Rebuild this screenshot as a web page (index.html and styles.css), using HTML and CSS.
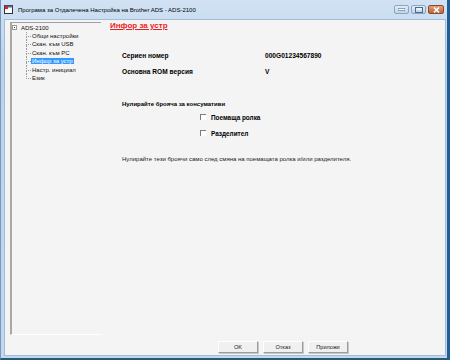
FILE: index.html
```html
<!DOCTYPE html>
<html lang="bg">
<head>
    <meta charset="UTF-8">
    <title>Програма за Отдалечена Настройка</title>
    <link rel="stylesheet" href="styles.css">
</head>
<body>
    <div class="window">
        <div class="titlebar">
            <svg class="app-icon" width="9" height="9" viewBox="0 0 9 9">
                <rect x="0.5" y="0.5" width="8" height="8" fill="#fff" stroke="#333"/>
                <rect x="0.5" y="0.5" width="8" height="2" fill="#4a6d9a"/>
                <rect x="1" y="1" width="3" height="3" fill="#d8262c"/>
            </svg>
            <span class="title">Програма за Отдалечена Настройка на Brother ADS - ADS-2100</span>
            <div class="caption-buttons">
                <span class="cap-btn">
                    <svg width="7" height="3" viewBox="0 0 7 3"><rect x="0" y="0.5" width="7" height="2" fill="#fff" stroke="#4d6b8a" stroke-width="0.6"/></svg>
                </span>
                <span class="cap-btn">
                    <svg width="8" height="6" viewBox="0 0 8 6"><rect x="0.5" y="0.5" width="7" height="5" fill="none" stroke="#4d6b8a"/><rect x="1.5" y="1.5" width="5" height="1" fill="#fff"/></svg>
                </span>
                <span class="cap-btn close">
                    <svg width="7" height="6" viewBox="0 0 7 6"><path d="M1 0.5 L6 5.5 M6 0.5 L1 5.5" stroke="#fff" stroke-width="1.6"/></svg>
                </span>
            </div>
        </div>

        <div class="client">
            <div class="main">
                <div class="tree">
                    <div class="tree-root">
                        <span class="expander"></span>
                        <span>ADS-2100</span>
                    </div>
                    <ul class="tree-children">
                        <li>Общи настройки</li>
                        <li>Скан. към USB</li>
                        <li>Скан. към PC</li>
                        <li><span class="selected">Инфор за устр</span></li>
                        <li>Настр. инициал</li>
                        <li>Език</li>
                    </ul>
                </div>

                <div class="content">
                    <div class="page-title">Инфор за устр</div>

                    <div class="info-grid">
                        <span>Сериен номер</span>
                        <span>000G01234567890</span>
                        <span>Основна ROM версия</span>
                        <span>V</span>
                    </div>

                    <div class="section-title">Нулирайте броячa за консумативи</div>

                    <div class="checks">
                        <label class="check"><span class="box"></span>Поемаща ролка</label>
                        <label class="check"><span class="box"></span>Разделител</label>
                    </div>

                    <div class="note">Нулирайте тези броячи само след смяна на поемащата ролка и/или разделителя.</div>
                </div>
            </div>

            <div class="buttons">
                <button class="btn">OK</button>
                <button class="btn">Отказ</button>
                <button class="btn">Приложи</button>
            </div>
        </div>
    </div>
</body>
</html>
```

FILE: styles.css
```css
body {
    margin: 0;
    font-family: "Liberation Sans", Arial, sans-serif;
    color: #000;
    background: #fff;
}

.window {
    width: 450px;
    height: 360px;
    box-sizing: border-box;
    display: flex;
    flex-direction: column;
    padding: 0 1px 2px 3px;
    border-left: 1px solid #7898bb;
    border-right: 3px solid #1f5f96;
    border-bottom: 2px solid #2b5873;
    background: linear-gradient(#d2e2f4, #bcd3ec 60px, #c2d8ee);
}

/* Title bar */
.titlebar {
    height: 19px;
    display: flex;
    align-items: center;
}

.app-icon {
    display: block;
    margin-right: 5px;
    margin-top: -1px;
}

.title {
    font-size: 6px;
    color: #000;
    white-space: nowrap;
}

.caption-buttons {
    display: flex;
    gap: 2px;
    margin-left: auto;
    margin-right: 2px;
    align-self: flex-start;
    margin-top: 5px;
}

.cap-btn {
    width: 15px;
    height: 9px;
    box-sizing: border-box;
    border: 1px solid #8aa5c2;
    border-radius: 2px;
    background: linear-gradient(#e3edf8, #bfd2e6);
    display: flex;
    align-items: center;
    justify-content: center;
}

.cap-btn.close {
    width: 16px;
    border-color: #8d4a2a;
    background: linear-gradient(#e0a07c, #c4612f);
}

/* Client area */
.client {
    flex: 1;
    display: flex;
    flex-direction: column;
    background: #f4f4f4;
    border: 1px solid #a3bcd8;
}

.main {
    display: flex;
    height: 315px;
}

/* Tree */
.tree {
    width: 89px;
    margin: 2px 0 0 5px;
    border-top: 1px solid #a0a0a0;
    border-left: 2px solid #aba7a5;
    border-bottom: 1px solid #fff;
    font-size: 6px;
    line-height: 8.45px;
    color: #111;
}

.tree-root {
    display: flex;
    align-items: center;
    margin-top: 0.5px;
}

.expander {
    width: 5px;
    height: 5px;
    box-sizing: border-box;
    border: 1px solid #9a9a9a;
    margin: 0 4px 0 0;
    position: relative;
    background: #fff;
}

.expander::after {
    content: "";
    position: absolute;
    left: 1px;
    top: 1px;
    width: 1px;
    border-top: 1px solid #444;
}

.tree-children {
    list-style: none;
    margin: 0 0 0 14px;
    padding: 0;
}

.tree-children li {
    position: relative;
    padding-left: 6px;
    white-space: nowrap;
}

.tree-children li::before {
    content: "";
    position: absolute;
    left: 0;
    top: 0;
    width: 4px;
    height: 4px;
    border-left: 1px dotted #9a9a9a;
    border-bottom: 1px dotted #9a9a9a;
}

.tree-children li:not(:last-child)::after {
    content: "";
    position: absolute;
    left: 0;
    top: 5px;
    bottom: 0;
    border-left: 1px dotted #9a9a9a;
}

.selected {
    background: #3399ff;
    color: #fff;
    padding: 0 1px;
    margin-left: -1px;
}

/* Content */
.content {
    margin-left: 9px;
    flex: 1;
    font-size: 6px;
}

.page-title {
    line-height: 12px;
    font-size: 8px;
    font-weight: bold;
    color: #ec1c24;
    text-decoration: underline;
}

.info-grid {
    display: grid;
    grid-template-columns: 143px auto;
    grid-auto-rows: 16px;
    align-items: center;
    margin: 15px 0 0 12px;
    font-size: 6.6px;
    font-weight: bold;
}

.section-title {
    margin: 19px 0 0 12px;
    line-height: 12px;
    font-size: 6px;
    font-weight: bold;
}

.checks {
    display: flex;
    flex-direction: column;
    margin: -1px 0 0 90px;
}

.check {
    height: 16px;
    display: flex;
    align-items: center;
    font-size: 6.4px;
    font-weight: bold;
}

.box {
    width: 6px;
    height: 6px;
    box-sizing: border-box;
    border-top: 1px solid #7a7a7a;
    border-left: 1px solid #7a7a7a;
    background: #fff;
    margin-right: 5px;
}

.note {
    margin: 12px 0 0 12px;
    line-height: 12px;
    color: #222;
}

/* Dialog buttons */
.buttons {
    display: flex;
    justify-content: flex-end;
    gap: 5px;
    margin: 6px 97px 0 0;
}

.btn {
    width: 40px;
    height: 12px;
    padding: 0;
    font-family: inherit;
    font-size: 5.6px;
    color: #222;
    background: #f0f0f0;
    border: 1px solid;
    border-color: #fff #9c9c9c #9c9c9c #fff;
    box-shadow: 1px 1px 0 #c8c8c8;
}
```
